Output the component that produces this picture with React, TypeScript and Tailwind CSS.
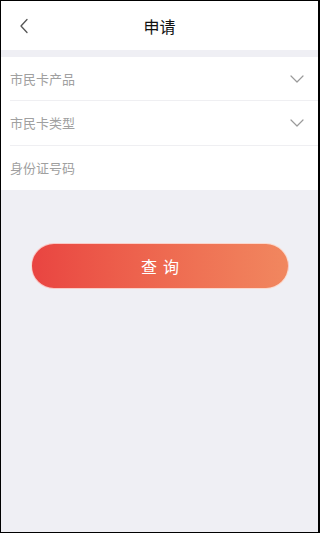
import React from "react";

const Chevron = () => (
  <svg width="14" height="8" viewBox="0 0 14 8" fill="none">
    <path d="M1 1L7 7L13 1" stroke="#9a9a9a" strokeWidth="1.2" strokeLinecap="round" strokeLinejoin="round" />
  </svg>
);

export default function App() {
  const font = { fontFamily: '"Noto Sans CJK SC", "Noto Sans", sans-serif' };
  return (
    <div
      className="w-[320px] h-[533px] bg-[#efeff4] border border-black border-r-2 flex flex-col overflow-hidden"
      style={font}
    >
      <div className="h-[49px] bg-white flex items-center relative shrink-0">
        <div className="absolute left-[18px] top-[17px]">
          <svg width="10" height="16" viewBox="0 0 10 16" fill="none">
            <path d="M8 1.5L2 8L8 14.5" stroke="#555" strokeWidth="1.3" strokeLinecap="round" strokeLinejoin="round" />
          </svg>
        </div>
        <div className="flex-1 text-center text-[16px] text-[#111] leading-none">申请</div>
      </div>
      <div className="h-[7px] shrink-0" />
      <div className="bg-white flex flex-col pl-[9px] shrink-0">
        <div className="h-[44px] flex items-center justify-between pr-[14px] border-b border-[#efeff2]">
          <span className="text-[13px] text-[#a0a0a0]">市民卡产品</span>
          <Chevron />
        </div>
        <div className="h-[45px] flex items-center justify-between pr-[14px] border-b border-[#efeff2]">
          <span className="text-[13px] text-[#a0a0a0]">市民卡类型</span>
          <Chevron />
        </div>
        <div className="h-[44px] flex items-center">
          <span className="text-[13px] text-[#a0a0a0]">身份证号码</span>
        </div>
      </div>
      <div className="pt-[53px] pl-[30px] pr-[29px]">
        <div className="h-[46px] rounded-full bg-gradient-to-r from-[#e94441] to-[#f1875f] flex items-center justify-center border border-white/70">
          <span className="text-white text-[16px] tracking-[6px] pl-[6px]">查询</span>
        </div>
      </div>
    </div>
  );
}
